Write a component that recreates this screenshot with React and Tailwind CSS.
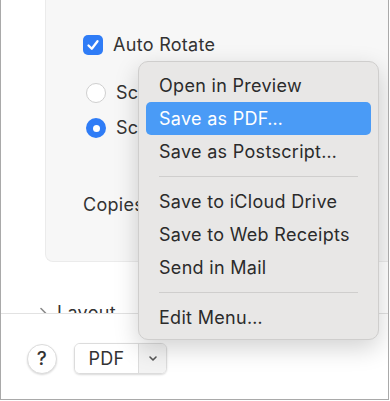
import React from 'react';

const font = { fontFamily: 'Inter, "Liberation Sans", sans-serif' };

const MenuItem = ({ label, active }) => (
  <div
    className={`h-[33px] mx-[7px] px-[13px] flex items-center rounded-[5px] ${
      active ? 'bg-[#4a9bf6] text-white' : 'text-[#2b2b2b]'
    }`}
  >
    {label}
  </div>
);

const Sep = () => (
  <div className="h-[17px] flex items-center px-[20px]">
    <div className="w-full h-px bg-[#cfcecd]" />
  </div>
);

const Radio = ({ on }) =>
  on ? (
    <div className="w-[20px] h-[20px] rounded-full bg-[#2f7cf6] flex items-center justify-center">
      <div className="w-[7px] h-[7px] rounded-full bg-white" />
    </div>
  ) : (
    <div className="w-[20px] h-[20px] rounded-full bg-white border border-[#cfcfcf]" />
  );

export default function App() {
  return (
    <div
      className="relative w-[389px] h-[400px] bg-white border-l border-r border-b border-[#a9a9a9] overflow-hidden text-[18px] leading-[20px] tracking-[0.3px] text-[#333]"
      style={font}
    >
      {/* scrolling content */}
      <div className="h-[314px] overflow-hidden border-b border-[#e2e2e2]">
        <div className="ml-[44px] h-[262px] bg-[#f7f7f7] border-l border-b border-[#ebebeb] rounded-bl-[8px] pt-[35px]">
          <div className="flex items-center gap-[10px] pl-[37px] h-[20px]">
            <div className="w-[20px] h-[20px] rounded-[5px] bg-[#2f7cf6] flex items-center justify-center">
              <svg width="14" height="14" viewBox="0 0 14 14" fill="none">
                <path d="M2.5 7.5 L5.8 10.8 L11.5 3.2" stroke="white" strokeWidth="2.3" strokeLinecap="round" strokeLinejoin="round" />
              </svg>
            </div>
            <span>Auto Rotate</span>
          </div>
          <div className="flex items-center gap-[10px] pl-[40px] mt-[28px] h-[20px]">
            <Radio />
            <span>Sc</span>
          </div>
          <div className="flex items-center gap-[10px] pl-[40px] mt-[15px] h-[20px]">
            <Radio on />
            <span>Sc</span>
          </div>
          <div className="pl-[37px] mt-[57px] h-[20px]">Copies</div>
        </div>
        <div className="flex items-center gap-[9px] pl-[38px] mt-[41px] h-[20px]">
          <svg width="9" height="12" viewBox="0 0 9 12" fill="none">
            <path d="M2 1.5 L6.5 6 L2 10.5" stroke="#8a8a8a" strokeWidth="1.6" strokeLinecap="round" strokeLinejoin="round" />
          </svg>
          <span>Layout</span>
        </div>
      </div>

      {/* footer */}
      <div className="flex items-center pl-[26px] pt-[29px] gap-[17px]">
        <div className="w-[30px] h-[30px] rounded-full bg-white border border-[#dcdcdc] shadow-[0_1px_2px_rgba(0,0,0,0.15)] flex items-center justify-center text-[19px] font-medium text-[#333]">
          ?
        </div>
        <div className="flex h-[31px] rounded-[6px] border border-[#dcdcdc] shadow-[0_1px_2px_rgba(0,0,0,0.15)] overflow-hidden">
          <div className="w-[63px] bg-white flex items-center justify-center text-[#333]">PDF</div>
          <div className="w-[28px] bg-[#f3f3f3] border-l border-[#dcdcdc] flex items-center justify-center">
            <svg width="10" height="7" viewBox="0 0 10 7" fill="none">
              <path d="M2 2 L5 5 L8 2" stroke="#555" strokeWidth="1.6" strokeLinecap="round" strokeLinejoin="round" />
            </svg>
          </div>
        </div>
      </div>

      {/* popup menu */}
      <div className="absolute left-[137px] top-[61px] w-[241px] h-[279px] bg-[#e8e7e6] border border-[#cfcecd] rounded-[10px] shadow-[0_8px_24px_rgba(0,0,0,0.18)] pt-[7px] pb-[6px]">
        <MenuItem label="Open in Preview" />
        <MenuItem label="Save as PDF…" active />
        <MenuItem label="Save as Postscript…" />
        <Sep />
        <MenuItem label="Save to iCloud Drive" />
        <MenuItem label="Save to Web Receipts" />
        <MenuItem label="Send in Mail" />
        <Sep />
        <MenuItem label="Edit Menu…" />
      </div>
    </div>
  );
}
